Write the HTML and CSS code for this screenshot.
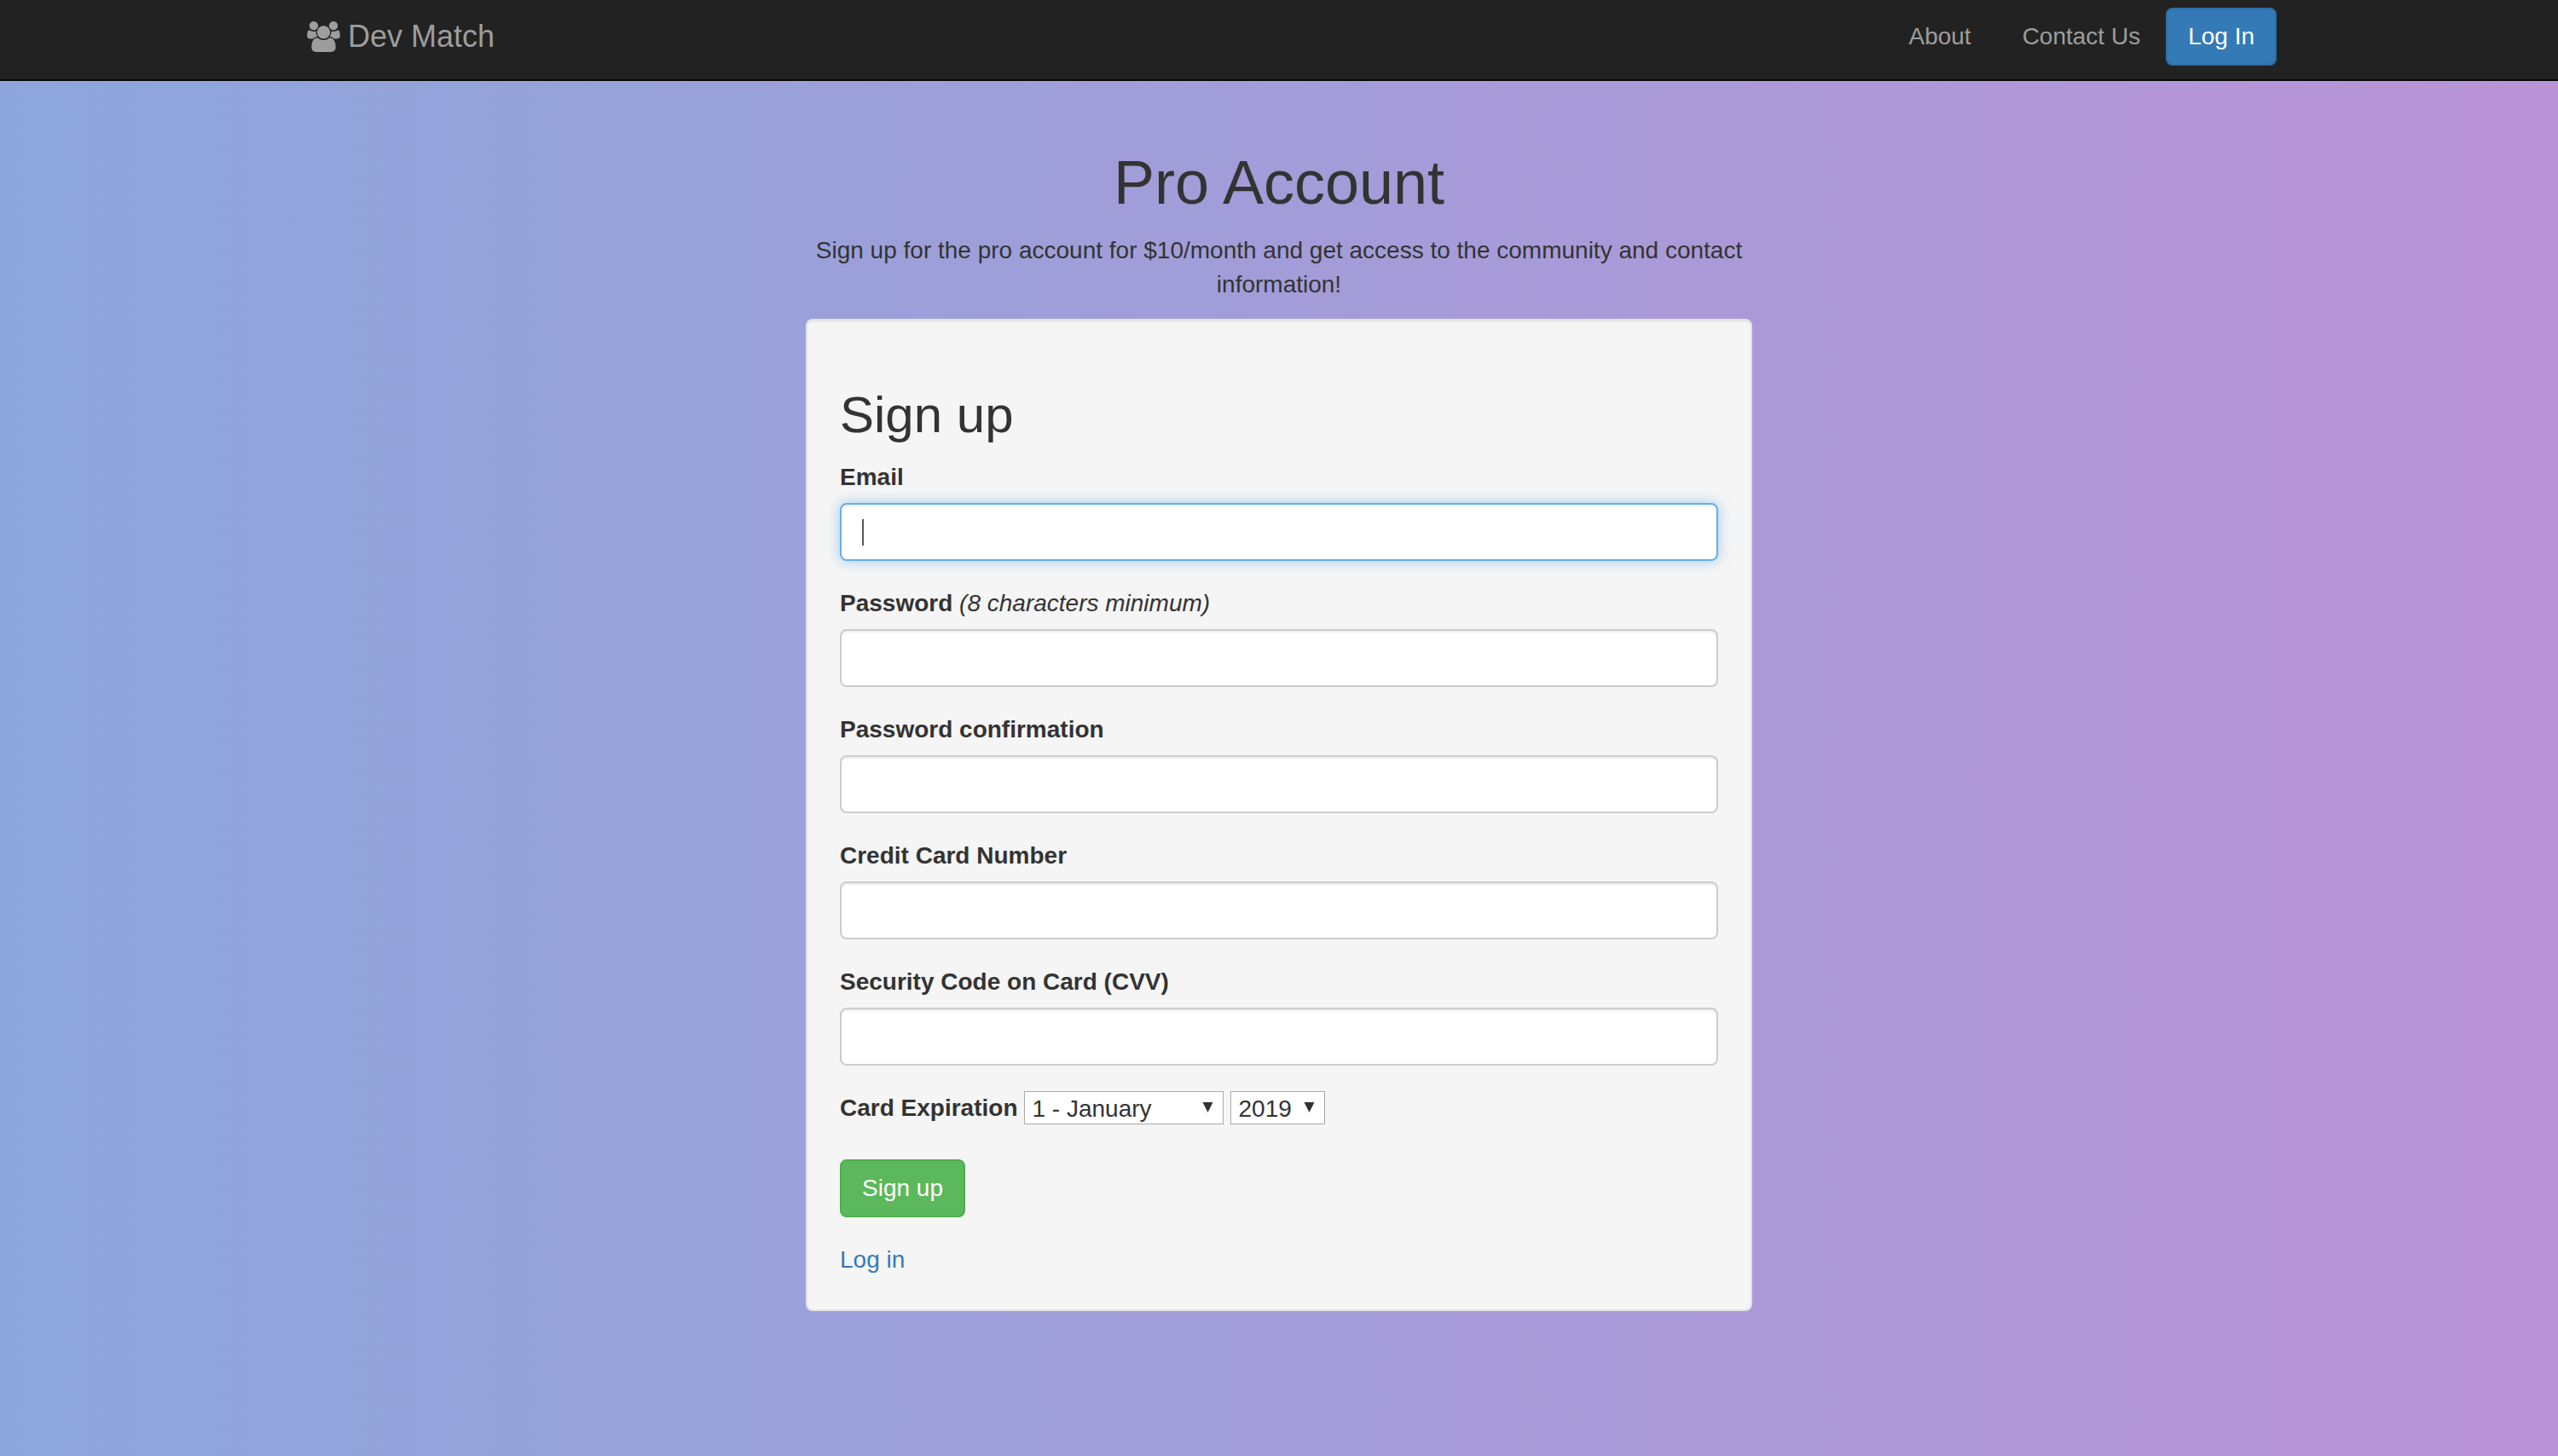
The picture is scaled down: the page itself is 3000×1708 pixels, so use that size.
FILE: index.html
```html
<!DOCTYPE html>
<html lang="en">
<head>
<meta charset="utf-8">
<meta name="viewport" content="width=device-width, initial-scale=1">
<title>Dev Match</title>
<link rel="stylesheet" href="styles.css">
</head>
<body>
<header class="navbar">
  <div class="navbar-inner">
    <a class="brand" href="#"><svg class="brand-icon" viewBox="0 0 1920 1792" aria-hidden="true"><path d="M593 896q-162 5-265 128h-134q-82 0-138-40.500t-56-118.500q0-353 124-353 6 0 43.500 21t97.500 42.500 119 21.500q67 0 133-23-5 37-5 66 0 139 81 256zm1071 637q0 120-73 189.500t-194 69.500h-874q-121 0-194-69.500t-73-189.500q0-53 3.500-103.500t14-109 26.500-108.500 43-97.500 62-81 85.500-53.500 111.500-20q10 0 43 21.500t73 48 107 48 135 21.500 135-21.500 107-48 73-48 43-21.500q61 0 111.500 20t85.500 53.500 62 81 43 97.500 26.500 108.500 14 109 3.500 103.500zm-1024-1277q0 106-75 181t-181 75-181-75-75-181 75-181 181-75 181 75 75 181zm704 384q0 159-112.500 271.500t-271.500 112.500-271.500-112.500-112.500-271.500 112.500-271.500 271.500-112.500 271.500 112.500 112.500 271.500zm576 225q0 78-56 118.500t-138 40.500h-134q-103-123-265-128 81-117 81-256 0-29-5-66 66 23 133 23 59 0 119-21.500t97.500-42.500 43.500-21q124 0 124 353zm-128-609q0 106-75 181t-181 75-181-75-75-181 75-181 181-75 181 75 75 181z"/></svg>Dev Match</a>
    <nav class="nav-links">
      <a class="nav-link" href="#">About</a>
      <a class="nav-link" href="#">Contact Us</a>
      <a class="btn btn-primary" href="#">Log In</a>
    </nav>
  </div>
</header>
<main class="column">
  <h1 class="title">Pro Account</h1>
  <p class="lead">Sign up for the pro account for $10/month and get access to the community and contact information!</p>
  <section class="well">
    <h2 class="form-title">Sign up</h2>
    <form>
      <div class="field">
        <label for="email">Email</label>
        <input class="control control-active" id="email" type="email" autofocus>
      </div>
      <div class="field">
        <div class="label-row"><label for="password">Password</label> <em>(8 characters minimum)</em></div>
        <input class="control" id="password" type="password">
      </div>
      <div class="field">
        <label for="confirmation">Password confirmation</label>
        <input class="control" id="confirmation" type="password">
      </div>
      <div class="field">
        <label for="card">Credit Card Number</label>
        <input class="control" id="card" type="text">
      </div>
      <div class="field">
        <label for="cvv">Security Code on Card (CVV)</label>
        <input class="control" id="cvv" type="text">
      </div>
      <div class="expiry">
        <label for="month">Card Expiration</label>
        <span class="picker picker-month">
          <select id="month">
            <option>1 - January</option><option>2 - February</option><option>3 - March</option><option>4 - April</option><option>5 - May</option><option>6 - June</option><option>7 - July</option><option>8 - August</option><option>9 - September</option><option>10 - October</option><option>11 - November</option><option>12 - December</option>
          </select>
        </span>
        <span class="picker picker-year">
          <select id="year" aria-label="Card expiration year">
            <option>2019</option><option>2020</option><option>2021</option><option>2022</option><option>2023</option>
          </select>
        </span>
      </div>
      <button class="btn btn-success" type="button">Sign up</button>
    </form>
    <a class="login" href="#">Log in</a>
  </section>
</main>
</body>
</html>
```
FILE: styles.css
```css
* {
  box-sizing: border-box;
}

body {
  margin: 0;
  min-height: 100vh;
  background: linear-gradient(to right, #8ca6db, #b993d6);
  color: #333;
  font-family: "Liberation Sans", Arial, sans-serif;
  font-size: 28px;
  line-height: 40px;
}

a {
  text-decoration: none;
}

/* Navigation bar */
.navbar {
  padding-top: 9px;
  min-height: 95px;
  background: #222;
  border-bottom: 2px solid #080808;
}

.navbar-inner {
  display: flex;
  justify-content: space-between;
  align-items: flex-start;
  max-width: 2340px;
  margin: 0 auto;
  padding-left: 30px;
}

.brand {
  display: flex;
  align-items: center;
  gap: 9px;
  padding: 14px 0;
  color: #9d9d9d;
  font-size: 36px;
}

.brand-icon {
  width: 39px;
  height: 36px;
  fill: currentColor;
}

.nav-links {
  display: flex;
}

.nav-link {
  padding: 14px 30px;
  color: #9d9d9d;
}

.btn {
  display: inline-block;
  padding: 12px 24px;
  border: 2px solid;
  border-radius: 8px;
  color: #fff;
  font: inherit;
}

.btn-primary {
  background: #337ab7;
  border-color: #2e6da4;
}

.btn-success {
  display: block;
  background: #5cb85c;
  border-color: #4cae4c;
}

/* Sign-up column */
.column {
  max-width: 1170px;
  margin: 0 auto;
  padding: 80px 30px 40px;
}

.title,
.form-title {
  margin: 0 0 20px;
  font-weight: 500;
}

.title {
  font-size: 72px;
  line-height: 79px;
  text-align: center;
}

.lead {
  margin: 0 0 20px;
  text-align: center;
}

.well {
  padding: 38px;
  background: #f5f5f5;
  border: 2px solid #e3e3e3;
  border-radius: 8px;
  box-shadow: inset 0 2px 2px rgba(0, 0, 0, 0.05);
}

.form-title {
  margin-top: 40px;
  font-size: 60px;
  line-height: 66px;
}

label {
  font-weight: 700;
}

.field {
  display: flex;
  flex-direction: column;
  gap: 10px;
  margin-bottom: 30px;
}

.control {
  width: 100%;
  height: 68px;
  padding: 12px 24px;
  background: #fff;
  border: 2px solid #ccc;
  border-radius: 8px;
  box-shadow: inset 0 2px 2px rgba(0, 0, 0, 0.075);
  color: #555;
  font: inherit;
  outline: 0;
}

/* The empty active field shows a steady insertion bar */
.control-active {
  border-color: #66afe9;
  box-shadow: inset 0 2px 2px rgba(0, 0, 0, 0.075), 0 0 16px rgba(102, 175, 233, 0.6);
  background: linear-gradient(#555, #555) 24px 17px / 2px 31px no-repeat #fff;
  caret-color: transparent;
}

.expiry {
  display: flex;
  gap: 8px;
  margin-bottom: 40px;
}

.picker {
  position: relative;
  height: 39px;
}

.picker-month {
  width: 234px;
}

.picker-year {
  width: 111px;
}

.picker::after {
  content: "";
  position: absolute;
  top: 13px;
  right: 13px;
  width: 12px;
  height: 12px;
  background: #333;
  clip-path: polygon(0 0, 100% 0, 50% 100%);
  pointer-events: none;
}

.picker select {
  appearance: none;
  display: block;
  width: 100%;
  height: 100%;
  padding: 0 8px 2px;
  background: #fff;
  border: 1px solid #a9a9a9;
  border-radius: 0;
  color: #333;
  font: inherit;
}

.login {
  display: block;
  margin-top: 30px;
  color: #337ab7;
}
```
